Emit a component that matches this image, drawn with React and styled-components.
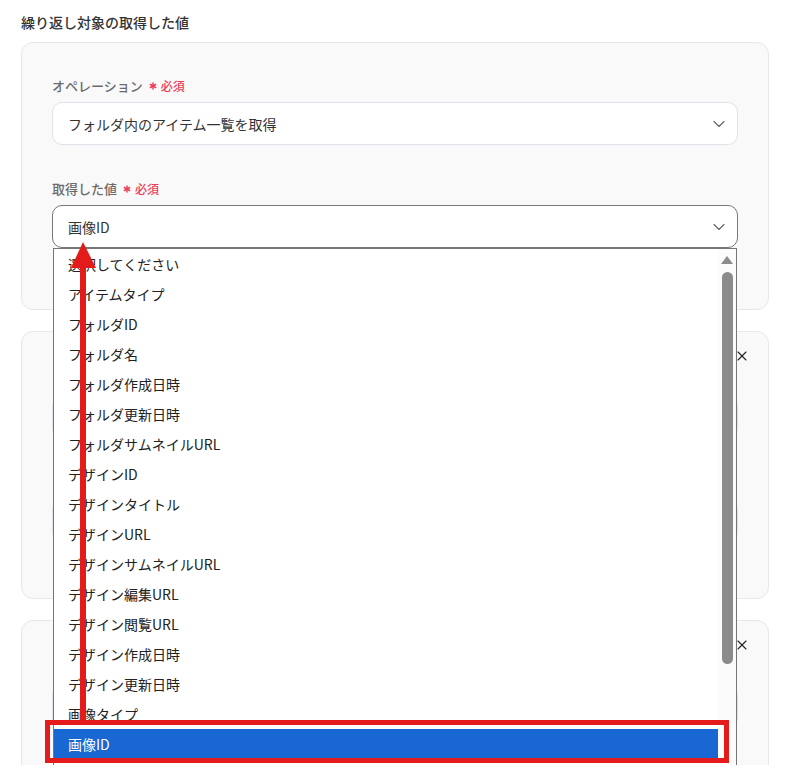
import React from "react";
import styled, { createGlobalStyle } from "styled-components";
import { ChevronDown, X, Asterisk } from "lucide-react";

const GlobalStyle = createGlobalStyle`
  html, body {
    margin: 0;
    padding: 0;
    overflow: hidden;
    background: #ffffff;
    font-family: "Noto Sans CJK JP", "Noto Sans", sans-serif;
  }
`;

const Page = styled.div`
  position: relative;
  box-sizing: border-box;
  height: 765px;
  overflow: hidden;
  padding: 12px 36px 0 21px;
`;

const Title = styled.div`
  font-size: 14px;
  line-height: 20px;
  font-weight: 500;
  color: #333333;
  margin-bottom: 10px;
`;

const Card = styled.div`
  position: relative;
  box-sizing: border-box;
  background: #f9f9f9;
  border: 1px solid #e8e8e8;
  border-radius: 12px;
  padding: ${(p) => p.$padding};
  margin-bottom: 21px;
  min-height: ${(p) => p.$minHeight || "auto"};
`;

const Label = styled.div`
  display: flex;
  align-items: center;
  gap: 3px;
  font-size: 13px;
  line-height: 20px;
  font-weight: 500;
  color: #6b6b6b;
  margin-top: ${(p) => p.$top || "0"};
  margin-bottom: 6px;
`;

const Required = styled.span`
  display: inline-flex;
  align-items: center;
  gap: 2px;
  font-size: 12px;
  font-weight: 500;
  color: #ee3d58;
  margin-left: 1px;
`;

const SelectWrap = styled.div`
  position: relative;
  z-index: ${(p) => (p.$open ? 10 : 1)};
`;

const SelectBox = styled.div`
  box-sizing: border-box;
  height: 43px;
  display: flex;
  align-items: center;
  justify-content: space-between;
  padding: 0 8px 0 15px;
  background: #ffffff;
  border: 1px solid ${(p) => (p.$focused ? "#777777" : "#e1e1ea")};
  border-radius: 10px;
  font-size: 14px;
  color: #333333;
`;

const Menu = styled.div`
  position: absolute;
  top: 100%;
  left: 1px;
  right: 1px;
  height: 560px;
  display: flex;
  background: #ffffff;
  border: 1px solid #767676;
`;

const Options = styled.div`
  flex: 1;
  display: flex;
  flex-direction: column;
`;

const Option = styled.div`
  height: 30px;
  display: flex;
  align-items: center;
  padding-left: 14px;
  font-size: 14px;
  color: ${(p) => (p.$active ? "#ffffff" : "#222222")};
  background: ${(p) => (p.$active ? "#1967d2" : "transparent")};
`;

const ScrollTrack = styled.div`
  width: 18px;
  display: flex;
  flex-direction: column;
  align-items: center;
  padding-top: 7px;
  gap: 8px;
  background: #fbfbfb;
`;

const ScrollArrow = styled.div`
  width: 0;
  height: 0;
  border-left: 6px solid transparent;
  border-right: 6px solid transparent;
  border-bottom: 8px solid #8b8b8b;
`;

const ScrollThumb = styled.div`
  width: 11px;
  height: 392px;
  border-radius: 6px;
  background: #8b8b8b;
`;

const HeaderRow = styled.div`
  display: flex;
  justify-content: flex-end;
  height: 14px;
  margin-right: -12px;
  color: #222222;
`;

const Input = styled.div`
  box-sizing: border-box;
  height: 43px;
  background: #ffffff;
  border: 1px solid #e1e1ea;
  border-radius: 10px;
  padding: 0 15px;
  display: flex;
  align-items: center;
  font-size: 14px;
  color: #333333;
  margin-top: ${(p) => p.$top || "0"};
`;

const Note = styled.div`
  font-size: 11px;
  line-height: 16px;
  color: #e08a3c;
  margin-top: ${(p) => p.$top || "0"};
`;

const Overlay = styled.svg`
  position: absolute;
  top: 0;
  left: 0;
  z-index: 20;
  pointer-events: none;
`;

const OPTIONS = [
  "選択してください",
  "アイテムタイプ",
  "フォルダID",
  "フォルダ名",
  "フォルダ作成日時",
  "フォルダ更新日時",
  "フォルダサムネイルURL",
  "デザインID",
  "デザインタイトル",
  "デザインURL",
  "デザインサムネイルURL",
  "デザイン編集URL",
  "デザイン閲覧URL",
  "デザイン作成日時",
  "デザイン更新日時",
  "画像タイプ",
  "画像ID",
  "画像URL",
];

function RequiredMark() {
  return (
    <Required>
      <Asterisk size={12} strokeWidth={3} />
      必須
    </Required>
  );
}

function SubCard() {
  return (
    <Card $padding="16px 30px 30px" $minHeight="268px">
      <HeaderRow>
        <X size={16} strokeWidth={1.6} />
      </HeaderRow>
      <Label $top="8px">
        アウトプット
        <RequiredMark />
      </Label>
      <Input>画像ID</Input>
      <Note $top="22px">※ 取得した値を使用できます</Note>
      <Input $top="22px">値を入力</Input>
      <Note>※ 条件に一致した場合のみ繰り返します</Note>
    </Card>
  );
}

export default function App() {
  return (
    <>
      <GlobalStyle />
      <Page>
        <Title>繰り返し対象の取得した値</Title>
        <Card $padding="33px 30px 61px">
          <Label>
            オペレーション
            <RequiredMark />
          </Label>
          <SelectWrap>
            <SelectBox>
              フォルダ内のアイテム一覧を取得
              <ChevronDown size={20} strokeWidth={1.4} color="#666" />
            </SelectBox>
          </SelectWrap>
          <Label $top="34px">
            取得した値
            <RequiredMark />
          </Label>
          <SelectWrap $open>
            <SelectBox $focused>
              画像ID
              <ChevronDown size={20} strokeWidth={1.4} color="#666" />
            </SelectBox>
            <Menu>
              <Options>
                {OPTIONS.map((o) => (
                  <Option key={o} $active={o === "画像ID"}>
                    {o}
                  </Option>
                ))}
              </Options>
              <ScrollTrack>
                <ScrollArrow />
                <ScrollThumb />
              </ScrollTrack>
            </Menu>
          </SelectWrap>
        </Card>
        <SubCard />
        <SubCard />

        <Overlay width="805" height="765" viewBox="0 0 805 765">
          <rect x="80" y="262" width="6" height="462" fill="#e31b1b" />
          <polygon points="83,242 71,268 96,268" fill="#e31b1b" />
          <rect
            x="47.5"
            y="722.5"
            width="679"
            height="38"
            fill="none"
            stroke="#e31b1b"
            strokeWidth="5"
          />
        </Overlay>
      </Page>
    </>
  );
}
